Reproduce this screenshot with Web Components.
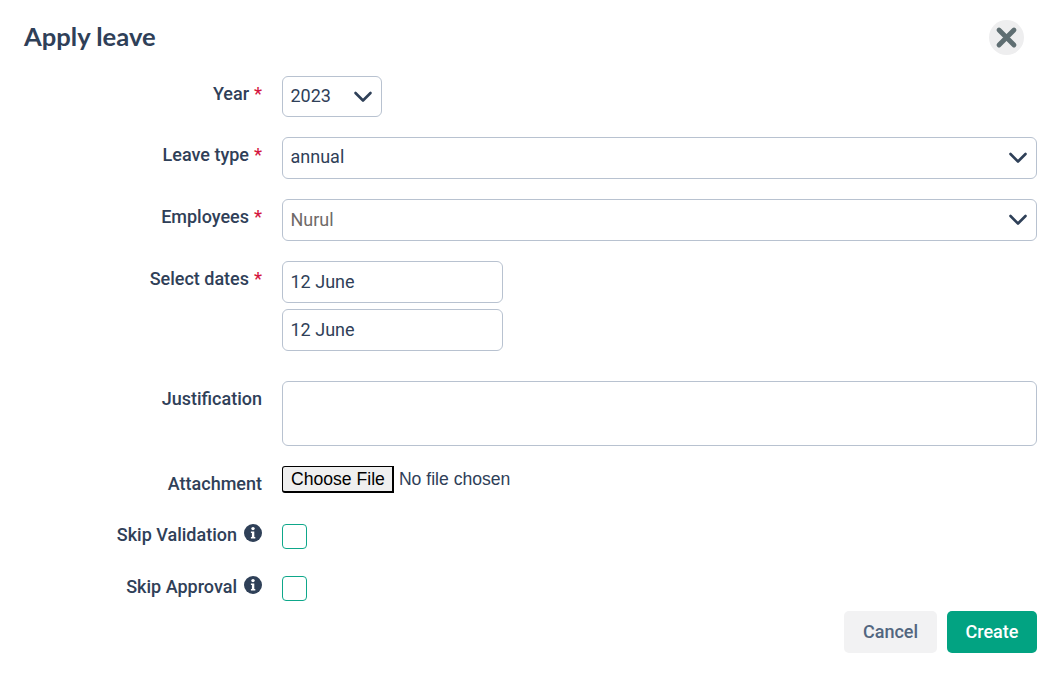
<!DOCTYPE html>
<html>
<head>
<meta charset="utf-8">
<title>Apply leave</title>
<style>
  html, body { margin: 0; background: #fff; }
  body { font-family: Roboto, sans-serif; color: #2f4058; }
</style>
</head>
<body>
<leave-dialog>
  <form-row label="Year" required><select-box value="2023" width="100px" height="41px" raised></select-box></form-row>
  <form-row label="Leave type" required><select-box value="annual" raised></select-box></form-row>
  <form-row label="Employees" required><select-box value="Nurul" muted></select-box></form-row>
  <form-row label="Select dates" required gap="30px">
    <text-box value="12 June"></text-box>
    <text-box value="12 June"></text-box>
  </form-row>
  <form-row label="Justification"><text-area></text-area></form-row>
  <form-row label="Attachment" gap="30px"><file-picker></file-picker></form-row>
  <form-row label="Skip Validation" info gap="27px" label-top="0px"><check-box></check-box></form-row>
  <form-row label="Skip Approval" info gap="10px" label-top="0px"><check-box></check-box></form-row>
  <action-button slot="actions">Cancel</action-button>
  <action-button slot="actions" primary>Create</action-button>
</leave-dialog>

<script>
class LeaveDialog extends HTMLElement {
  constructor() {
    super();
    const shadow = this.attachShadow({ mode: "open" });
    shadow.innerHTML = `
      <style>
        :host { display: block; width: 1054px; height: 676px; box-sizing: border-box; padding: 20px 17px 0 24px; }
        header { display: flex; justify-content: space-between; align-items: center; height: 35px; margin-bottom: 21px; }
        h2 { margin: 0 0 2px; font: 700 25.6px/33px Lato, sans-serif; color: #2f4058; }
        button { width: 35px; height: 35px; margin-right: 13px; padding: 0; border: 0; border-radius: 50%; background: #eeeeef; display: flex; align-items: center; justify-content: center; }
        .actions { display: flex; justify-content: flex-end; gap: 10px; }
      </style>
      <header>
        <h2>Apply leave</h2>
        <button aria-label="Close">
          <svg width="23" height="23" viewBox="0 0 23 23"><path d="M4 4 L19 19 M19 4 L4 19" stroke="#5f6e72" stroke-width="4.8" stroke-linecap="round"/></svg>
        </button>
      </header>
      <slot></slot>
      <div class="actions"><slot name="actions"></slot></div>
    `;
  }
}

class FormRow extends HTMLElement {
  constructor() {
    super();
    const shadow = this.attachShadow({ mode: "open" });
    const star = this.hasAttribute("required") ? `<span class="star">*</span>` : "";
    const info = this.hasAttribute("info")
      ? `<svg class="info" width="18" height="18" viewBox="0 0 18 18"><circle cx="9" cy="9" r="9" fill="#2f4058"/><circle cx="9" cy="4.6" r="1.7" fill="#fff"/><path d="M6.9 7.4h3.4v5.6h1v1.6H6.9V13h1v-4h-1z" fill="#fff"/></svg>`
      : "";
    shadow.innerHTML = `
      <style>
        :host { display: grid; grid-template-columns: 238px 755px; column-gap: 20px; margin-bottom: ${this.getAttribute("gap") || "20px"}; }
        label { display: flex; justify-content: flex-end; align-items: center; gap: 5px; height: 21px; margin-top: ${this.getAttribute("label-top") || "7px"}; font: 500 18px/21px Roboto, sans-serif; color: #2f4058; white-space: nowrap; }
        .star { color: #d4173f; }
        .info { margin-left: 2px; margin-top: -3px; }
        .field { display: flex; flex-direction: column; gap: 6px; align-items: flex-start; }
      </style>
      <label>${this.getAttribute("label")}${star}${info}</label>
      <div class="field"><slot></slot></div>
    `;
  }
}

class SelectBox extends HTMLElement {
  constructor() {
    super();
    const shadow = this.attachShadow({ mode: "open" });
    const color = this.hasAttribute("muted") ? "#6f6a68" : "#2f4058";
    const textPad = this.hasAttribute("raised") ? "2px" : "0";
    shadow.innerHTML = `
      <style>
        :host { display: flex; align-items: center; justify-content: space-between; box-sizing: border-box; width: ${this.getAttribute("width") || "755px"}; height: ${this.getAttribute("height") || "42px"}; padding: 0 8px 0 7.5px; border: 1px solid #b8c2d0; border-radius: 6px; background: #fff; font: 400 18px/20px Roboto, sans-serif; color: ${color}; }
        span { padding-bottom: ${textPad}; }
        svg { display: block; }
      </style>
      <span>${this.getAttribute("value")}</span>
      <svg width="20" height="12" viewBox="0 0 20 12"><path d="M2.5 2 L10 9.5 L17.5 2" fill="none" stroke="#2f4058" stroke-width="2.6" stroke-linecap="round" stroke-linejoin="round"/></svg>
    `;
  }
}

class TextBox extends HTMLElement {
  constructor() {
    super();
    const shadow = this.attachShadow({ mode: "open" });
    shadow.innerHTML = `
      <style>
        :host { display: flex; align-items: center; box-sizing: border-box; width: 221px; height: 42px; padding: 0 7.5px; border: 1px solid #b8c2d0; border-radius: 6px; background: #fff; font: 400 18px/20px Roboto, sans-serif; color: #2f4058; }
      </style>
      <span>${this.getAttribute("value")}</span>
    `;
  }
}

class TextArea extends HTMLElement {
  constructor() {
    super();
    const shadow = this.attachShadow({ mode: "open" });
    shadow.innerHTML = `
      <style>
        :host { display: block; box-sizing: border-box; width: 755px; height: 65px; border: 1px solid #b8c2d0; border-radius: 6px; background: #fff; }
      </style>
    `;
  }
}

class FilePicker extends HTMLElement {
  constructor() {
    super();
    const shadow = this.attachShadow({ mode: "open" });
    shadow.innerHTML = `
      <style>
        :host { display: flex; align-items: center; gap: 5px; height: 27px; font: 400 17.6px "Liberation Sans", Arial, sans-serif; color: #2f4058; }
        .btn { box-sizing: border-box; height: 27px; padding: 0 7px 0 8px; display: flex; align-items: center; background: #efefef; color: #000; border: 1px solid #000; border-right-width: 2px; border-bottom-width: 2px; border-radius: 3px 0 0 3px; }
      </style>
      <span class="btn">Choose File</span>
      <span>No file chosen</span>
    `;
  }
}

class CheckBox extends HTMLElement {
  constructor() {
    super();
    const shadow = this.attachShadow({ mode: "open" });
    shadow.innerHTML = `
      <style>
        :host { display: block; box-sizing: border-box; width: 25px; height: 25px; border: 1px solid #0ea78a; border-radius: 4px; background: #fff; }
      </style>
    `;
  }
}

class ActionButton extends HTMLElement {
  constructor() {
    super();
    const shadow = this.attachShadow({ mode: "open" });
    const primary = this.hasAttribute("primary");
    shadow.innerHTML = `
      <style>
        :host { display: flex; align-items: center; justify-content: center; box-sizing: border-box; height: 42px; width: ${primary ? "90px" : "93px"}; border-radius: 5px; background: ${primary ? "#02a382" : "#f2f2f3"}; color: ${primary ? "#fff" : "#52667f"}; font: 500 18px/20px Roboto, sans-serif; }
      </style>
      <slot></slot>
    `;
  }
}

customElements.define("leave-dialog", LeaveDialog);
customElements.define("form-row", FormRow);
customElements.define("select-box", SelectBox);
customElements.define("text-box", TextBox);
customElements.define("text-area", TextArea);
customElements.define("file-picker", FilePicker);
customElements.define("check-box", CheckBox);
customElements.define("action-button", ActionButton);
</script>
</body>
</html>
